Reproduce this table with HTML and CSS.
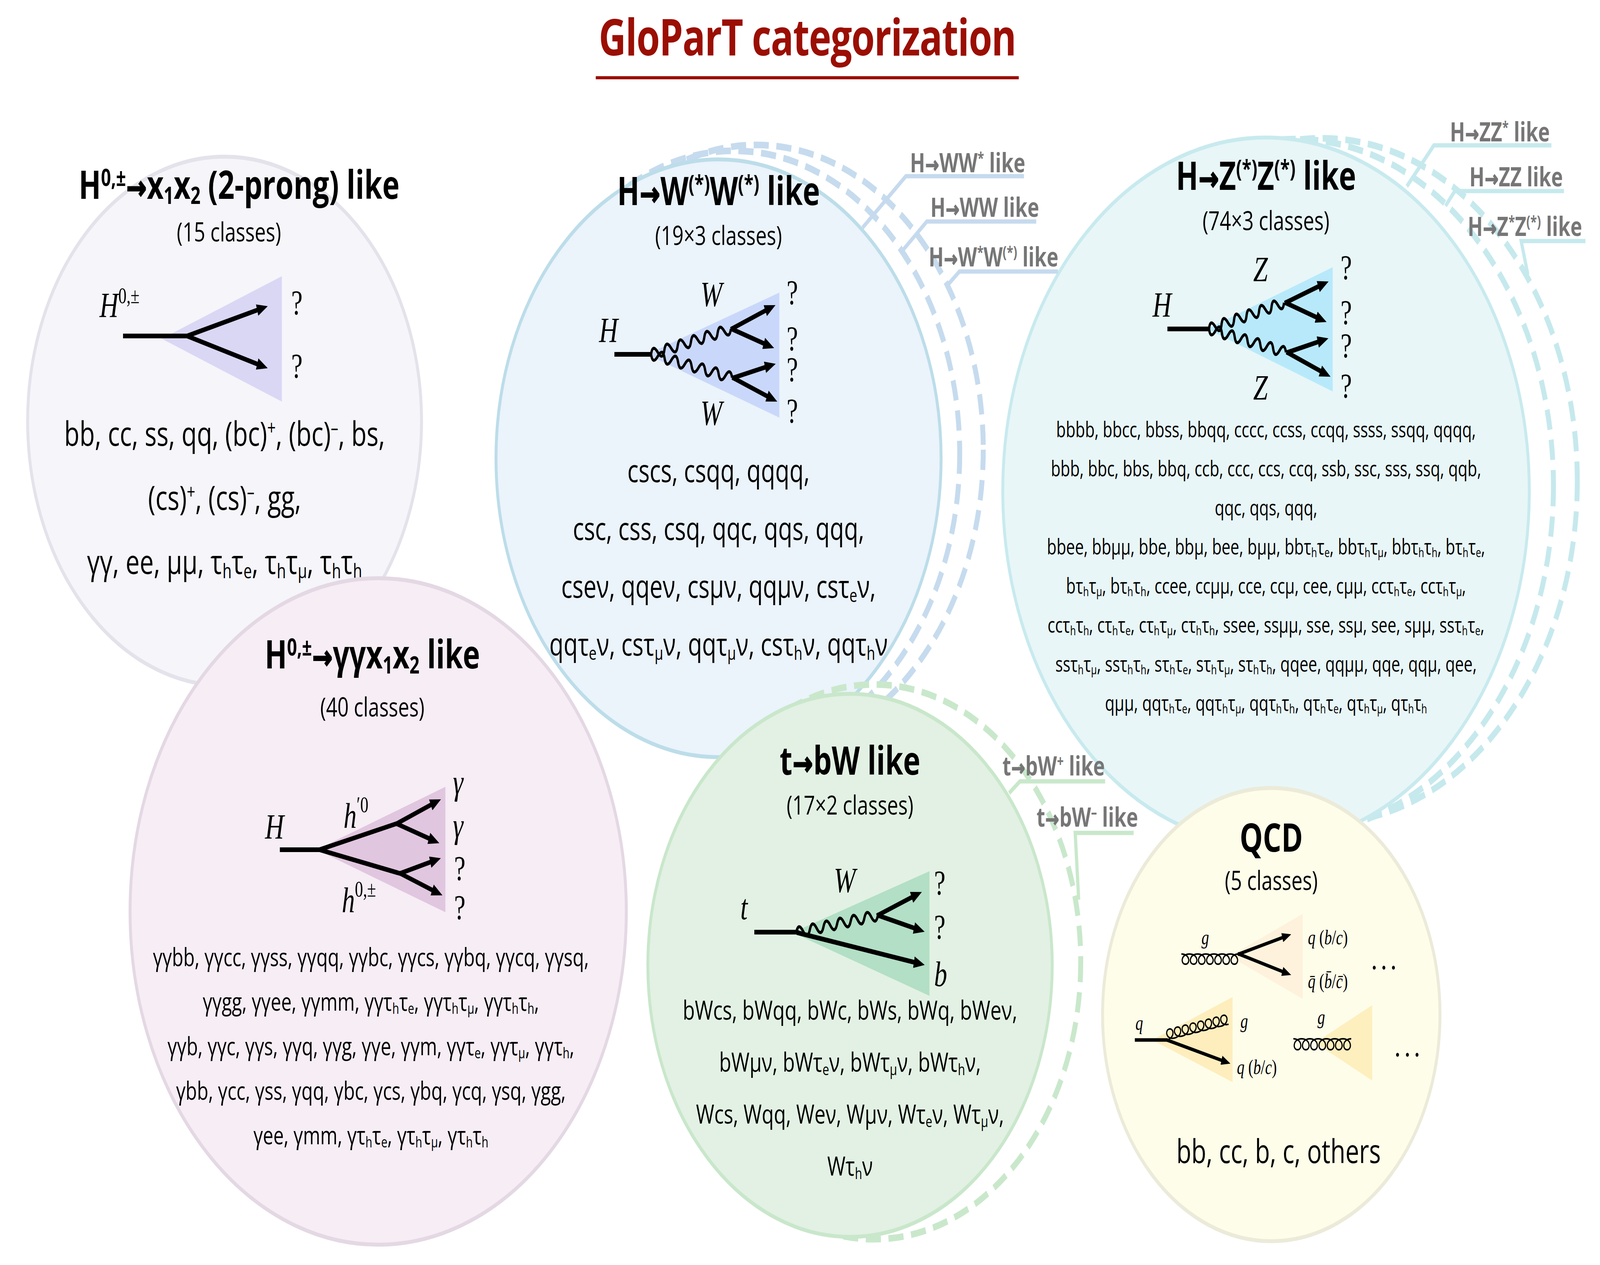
FILE: index.html
```html
<!DOCTYPE html>
<html lang="en">
<head>
<meta charset="utf-8">
<title>GloParT categorization</title>
<link rel="stylesheet" href="styles.css">
</head>
<body>
<div class="frame">
<div class="canvas">
  <svg class="defs" width="0" height="0" aria-hidden="true">
    <defs>
      <marker id="ah" viewBox="0 0 38 30" refX="22" refY="15" markerWidth="38" markerHeight="30" markerUnits="userSpaceOnUse" orient="auto"><path d="M0,0 L38,15 L0,30 z"/></marker>
      <marker id="ah2" viewBox="0 0 32 24" refX="19" refY="12" markerWidth="32" markerHeight="24" markerUnits="userSpaceOnUse" orient="auto"><path d="M0,0 L32,12 L0,24 z"/></marker>
    </defs>
  </svg>

  <header class="header"><h1 class="title">GloParT categorization</h1></header>

  <!-- 2-prong -->
  <section class="circle c1">
    <h2 class="ttl">H<sup>0,±</sup><span class="ar">→</span>x<sub>1</sub>x<sub>2</sub> (2-prong) like</h2>
    <p class="cnt">(15 classes)</p>
    <svg class="dg" width="904" height="344" viewBox="320 686 904 344">
      <polygon fill="#dad7f5" points="556,857 969,697 969,1018"/>
      <line class="ln" x1="423" y1="850" x2="645" y2="850"/>
      <line class="ln arw" x1="643" y1="850" x2="905" y2="778"/>
      <line class="ln arw" x1="643" y1="850" x2="905" y2="928"/>
      <text class="mi" x="342" y="802">H<tspan class="ms" dy="-36">0,±</tspan></text>
      <text class="mr" x="1001" y="794">?</text>
      <text class="mr" x="1001" y="956">?</text>
    </svg>
    <div class="lines">
      <div>bb, cc, ss, qq, (bc)<sup>+</sup>, (bc)<sup>–</sup>, bs,</div>
      <div>(cs)<sup>+</sup>, (cs)<sup>–</sup>, gg,</div>
      <div>γγ, ee, μμ, τ<sub>h</sub>τ<sub>e</sub>, τ<sub>h</sub>τ<sub>μ</sub>, τ<sub>h</sub>τ<sub>h</sub></div>
    </div>
  </section>

  <!-- gamma gamma -->
  <section class="circle c4">
    <h2 class="ttl">H<sup>0,±</sup><span class="ar">→</span>γγx<sub>1</sub>x<sub>2</sub> like</h2>
    <p class="cnt">(40 classes)</p>
    <svg class="dg" width="820" height="375" viewBox="890 1975 820 375">
      <polygon fill="#e1c6df" points="1089,2165 1531,2004 1531,2325"/>
      <line class="ln" x1="962" y1="2165" x2="1102" y2="2165"/>
      <line class="ln" x1="1098" y1="2165" x2="1364" y2="2098"/>
      <line class="ln" x1="1098" y1="2165" x2="1376" y2="2226"/>
      <line class="ln arw" x1="1362" y1="2099" x2="1501" y2="2042"/>
      <line class="ln arw" x1="1362" y1="2098" x2="1495" y2="2143"/>
      <line class="ln arw" x1="1374" y1="2226" x2="1500" y2="2191"/>
      <line class="ln arw" x1="1374" y1="2225" x2="1506" y2="2276"/>
      <text class="mi" x="911" y="2137">H</text>
      <text class="mi" x="1181" y="2109">h<tspan class="ms" dy="-40">′0</tspan></text>
      <text class="mi" x="1175" y="2325">h<tspan class="ms" dy="-40">0,±</tspan></text>
      <text class="mi" x="1557" y="2023">γ</text>
      <text class="mi" x="1557" y="2134">γ</text>
      <text class="mr" x="1561" y="2242">?</text>
      <text class="mr" x="1561" y="2342">?</text>
    </svg>
    <div class="lines">
      <div>γγbb, γγcc, γγss, γγqq, γγbc, γγcs, γγbq, γγcq, γγsq,</div>
      <div>γγgg, γγee, γγmm, γγτ<sub>h</sub>τ<sub>e</sub>, γγτ<sub>h</sub>τ<sub>μ</sub>, γγτ<sub>h</sub>τ<sub>h</sub>,</div>
      <div>γγb, γγc, γγs, γγq, γγg, γγe, γγm, γγτ<sub>e</sub>, γγτ<sub>μ</sub>, γγτ<sub>h</sub>,</div>
      <div>γbb, γcc, γss, γqq, γbc, γcs, γbq, γcq, γsq, γgg,</div>
      <div>γee, γmm, γτ<sub>h</sub>τ<sub>e</sub>, γτ<sub>h</sub>τ<sub>μ</sub>, γτ<sub>h</sub>τ<sub>h</sub></div>
    </div>
  </section>

  <!-- H->WW dashed alternatives -->
  <svg class="layer" width="5500" height="3238" viewBox="0 0 5500 3238" aria-hidden="true">
    <circle class="dash dash-b" cx="2524" cy="1161" r="775"/>
    <circle class="dash dash-b" cx="2600" cy="1151" r="780"/>
  </svg>
  <section class="circle c2">
    <h2 class="ttl">H<span class="ar">→</span>W<sup>(*)</sup>W<sup>(*)</sup> like</h2>
    <p class="cnt">(19×3 classes)</p>
    <svg class="dg" width="860" height="395" viewBox="2040 700 860 395">
      <polygon fill="#c9d8fa" points="2224,897 2679,739 2679,1059"/>
      <line class="ln" x1="2112" y1="897" x2="2242" y2="897"/>
      <path class="wv" transform="translate(2238,897) rotate(-13.3)" d="M0,0q11.75,-26 23.5,0t23.5,0t23.5,0t23.5,0t23.5,0t23.5,0t23.5,0t23.5,0t23.5,0t23.5,0t23.5,0t23.5,0"/>
      <path class="wv" transform="translate(2238,897) rotate(12.1)" d="M0,0q11.9,26 23.75,0t23.75,0t23.75,0t23.75,0t23.75,0t23.75,0t23.75,0t23.75,0t23.75,0t23.75,0t23.75,0t23.75,0"/>
      <line class="ln arw" x1="2512" y1="833" x2="2651" y2="777"/>
      <line class="ln arw" x1="2512" y1="831" x2="2646" y2="876"/>
      <line class="ln arw" x1="2517" y1="958" x2="2651" y2="925"/>
      <line class="ln arw" x1="2517" y1="956" x2="2657" y2="1012"/>
      <text class="mi" x="2059" y="866">H</text>
      <text class="mi" x="2408" y="774">W</text>
      <text class="mi" x="2408" y="1078">W</text>
      <text class="mr" x="2704" y="768">?</text>
      <text class="mr" x="2704" y="886">?</text>
      <text class="mr" x="2704" y="965">?</text>
      <text class="mr" x="2704" y="1071">?</text>
    </svg>
    <div class="lines">
      <div>cscs, csqq, qqqq,</div>
      <div>csc, css, csq, qqc, qqs, qqq,</div>
      <div>cseν, qqeν, csμν, qqμν, csτ<sub>e</sub>ν,</div>
      <div>qqτ<sub>e</sub>ν, csτ<sub>μ</sub>ν, qqτ<sub>μ</sub>ν, csτ<sub>h</sub>ν, qqτ<sub>h</sub>ν</div>
    </div>
  </section>

  <!-- H->ZZ dashed alternatives -->
  <svg class="layer" width="5500" height="3238" viewBox="0 0 5500 3238" aria-hidden="true">
    <circle class="dash dash-c" cx="4452" cy="1244" r="888"/>
    <circle class="dash dash-c" cx="4545" cy="1231" r="877"/>
  </svg>
  <section class="circle c3">
    <h2 class="ttl">H<span class="ar">→</span>Z<sup>(*)</sup>Z<sup>(*)</sup> like</h2>
    <p class="cnt">(74×3 classes)</p>
    <svg class="dg" width="824" height="380" viewBox="3940 640 824 380">
      <polygon fill="#b8e9fb" points="4150,832 4581,674 4581,992"/>
      <line class="ln" x1="4013" y1="832" x2="4160" y2="832"/>
      <path class="wv" transform="translate(4156,832) rotate(-14.6)" d="M0,0q11.1,-26 22.2,0t22.2,0t22.2,0t22.2,0t22.2,0t22.2,0t22.2,0t22.2,0t22.2,0t22.2,0t22.2,0t22.2,0"/>
      <path class="wv" transform="translate(4156,832) rotate(12.8)" d="M0,0q11.3,26 22.6,0t22.6,0t22.6,0t22.6,0t22.6,0t22.6,0t22.6,0t22.6,0t22.6,0t22.6,0t22.6,0t22.6,0"/>
      <line class="ln arw" x1="4416" y1="766" x2="4552" y2="716"/>
      <line class="ln arw" x1="4416" y1="764" x2="4545" y2="809"/>
      <line class="ln arw" x1="4422" y1="893" x2="4551" y2="860"/>
      <line class="ln arw" x1="4422" y1="891" x2="4559" y2="948"/>
      <text class="mi" x="3962" y="801">H</text>
      <text class="mi" x="4308" y="710">Z</text>
      <text class="mi" x="4308" y="1013">Z</text>
      <text class="mr" x="4608" y="704">?</text>
      <text class="mr" x="4608" y="819">?</text>
      <text class="mr" x="4608" y="904">?</text>
      <text class="mr" x="4608" y="1007">?</text>
    </svg>
    <div class="lines">
      <div>bbbb, bbcc, bbss, bbqq, cccc, ccss, ccqq, ssss, ssqq, qqqq,</div>
      <div>bbb, bbc, bbs, bbq, ccb, ccc, ccs, ccq, ssb, ssc, sss, ssq, qqb,</div>
      <div>qqc, qqs, qqq,</div>
      <div>bbee, bbμμ, bbe, bbμ, bee, bμμ, bbτ<sub>h</sub>τ<sub>e</sub>, bbτ<sub>h</sub>τ<sub>μ</sub>, bbτ<sub>h</sub>τ<sub>h</sub>, bτ<sub>h</sub>τ<sub>e</sub>,</div>
      <div>bτ<sub>h</sub>τ<sub>μ</sub>, bτ<sub>h</sub>τ<sub>h</sub>, ccee, ccμμ, cce, ccμ, cee, cμμ, ccτ<sub>h</sub>τ<sub>e</sub>, ccτ<sub>h</sub>τ<sub>μ</sub>,</div>
      <div>ccτ<sub>h</sub>τ<sub>h</sub>, cτ<sub>h</sub>τ<sub>e</sub>, cτ<sub>h</sub>τ<sub>μ</sub>, cτ<sub>h</sub>τ<sub>h</sub>, ssee, ssμμ, sse, ssμ, see, sμμ, ssτ<sub>h</sub>τ<sub>e</sub>,</div>
      <div>ssτ<sub>h</sub>τ<sub>μ</sub>, ssτ<sub>h</sub>τ<sub>h</sub>, sτ<sub>h</sub>τ<sub>e</sub>, sτ<sub>h</sub>τ<sub>μ</sub>, sτ<sub>h</sub>τ<sub>h</sub>, qqee, qqμμ, qqe, qqμ, qee,</div>
      <div>qμμ, qqτ<sub>h</sub>τ<sub>e</sub>, qqτ<sub>h</sub>τ<sub>μ</sub>, qqτ<sub>h</sub>τ<sub>h</sub>, qτ<sub>h</sub>τ<sub>e</sub>, qτ<sub>h</sub>τ<sub>μ</sub>, qτ<sub>h</sub>τ<sub>h</sub></div>
    </div>
  </section>

  <!-- t->bW dashed alternative -->
  <svg class="layer" width="5500" height="3238" viewBox="0 0 5500 3238" aria-hidden="true">
    <circle class="dash dash-g" cx="3005" cy="2462" r="710"/>
  </svg>
  <section class="circle c5">
    <h2 class="ttl">t<span class="ar">→</span>bW like</h2>
    <p class="cnt">(17×2 classes)</p>
    <svg class="dg" width="784" height="321" viewBox="2530 2200 784 321">
      <polygon fill="#b2dfc5" points="2725,2377 3195,2220 3195,2539"/>
      <line class="ln" x1="2593" y1="2376" x2="2745" y2="2376"/>
      <path class="wv" transform="translate(2737,2377) rotate(-8.9)" d="M0,0q11.85,-26 23.7,0t23.7,0t23.7,0t23.7,0t23.7,0t23.7,0t23.7,0t23.7,0t23.7,0t23.7,0t23.7,0t23.7,0"/>
      <line class="ln arw" x1="3014" y1="2334" x2="3154" y2="2279"/>
      <line class="ln arw" x1="3014" y1="2332" x2="3163" y2="2371"/>
      <line class="ln arw" x1="2739" y1="2377" x2="3163" y2="2457"/>
      <text class="mi" x="2545" y="2343">t</text>
      <text class="mi" x="2866" y="2274">W</text>
      <text class="mr" x="3211" y="2279">?</text>
      <text class="mr" x="3211" y="2392">?</text>
      <text class="mi" x="3211" y="2514">b</text>
    </svg>
    <div class="lines">
      <div>bWcs, bWqq, bWc, bWs, bWq, bWeν,</div>
      <div>bWμν, bWτ<sub>e</sub>ν, bWτ<sub>μ</sub>ν, bWτ<sub>h</sub>ν,</div>
      <div>Wcs, Wqq, Weν, Wμν, Wτ<sub>e</sub>ν, Wτ<sub>μ</sub>ν,</div>
      <div>Wτ<sub>h</sub>ν</div>
    </div>
  </section>

  <!-- QCD -->
  <section class="circle c6">
    <h2 class="ttl">QCD</h2>
    <p class="cnt">(5 classes)</p>
    <svg class="dg" width="1020" height="460" viewBox="3860 2330 1020 460">
      <polygon fill="#fef2dd" points="4227,2449 4478,2340 4478,2558"/>
      <path class="gl" transform="translate(4061,2443)" d="M0,0c30.8,0 30.8,26 14,26c-16.8,0 -16.8,-26 14,-26c30.8,0 30.8,26 14,26c-16.8,0 -16.8,-26 14,-26c30.8,0 30.8,26 14,26c-16.8,0 -16.8,-26 14,-26c30.8,0 30.8,26 14,26c-16.8,0 -16.8,-26 14,-26c30.8,0 30.8,26 14,26c-16.8,0 -16.8,-26 14,-26c30.8,0 30.8,26 14,26c-16.8,0 -16.8,-26 14,-26c30.8,0 30.8,26 14,26c-16.8,0 -16.8,-26 14,-26"/>
      <line class="ln2 arw2" x1="4255" y1="2444" x2="4426" y2="2396"/>
      <line class="ln2 arw2" x1="4255" y1="2442" x2="4426" y2="2493"/>
      <text class="mi sm" x="4130" y="2418">g</text>
      <text class="mr sm" x="4496" y="2418"><tspan class="it">q</tspan> (<tspan class="it">b</tspan>/<tspan class="it">c</tspan>)</text>
      <text class="mr sm" x="4496" y="2530"><tspan class="it">q̄</tspan> (<tspan class="it">b̄</tspan>/<tspan class="it">c̄</tspan>)</text>
      <circle cx="4724" cy="2478" r="5"/><circle cx="4757" cy="2478" r="5"/><circle cx="4790" cy="2478" r="5"/>

      <polygon fill="#feeebd" points="3961,2663 4237,2553 4237,2771"/>
      <line class="ln2" x1="3901" y1="2663" x2="4013" y2="2663"/>
      <path class="gl" transform="translate(4011,2663) rotate(-10.7)" d="M0,0c29.7,0 29.7,-26 13.5,-26c-16.2,0 -16.2,26 13.5,26c29.7,0 29.7,-26 13.5,-26c-16.2,0 -16.2,26 13.5,26c29.7,0 29.7,-26 13.5,-26c-16.2,0 -16.2,26 13.5,26c29.7,0 29.7,-26 13.5,-26c-16.2,0 -16.2,26 13.5,26c29.7,0 29.7,-26 13.5,-26c-16.2,0 -16.2,26 13.5,26c29.7,0 29.7,-26 13.5,-26c-16.2,0 -16.2,26 13.5,26c29.7,0 29.7,-26 13.5,-26c-16.2,0 -16.2,26 13.5,26c29.7,0 29.7,-26 13.5,-26c-16.2,0 -16.2,26 13.5,26"/>
      <line class="ln2 arw2" x1="4011" y1="2663" x2="4217" y2="2720"/>
      <text class="mi sm" x="3903" y="2637">q</text>
      <text class="mi sm" x="4264" y="2632">g</text>
      <text class="mr sm" x="4252" y="2750"><tspan class="it">q</tspan> (<tspan class="it">b</tspan>/<tspan class="it">c</tspan>)</text>

      <polygon fill="#feefbf" points="4521,2670 4717,2574 4717,2767"/>
      <path class="gl" transform="translate(4446,2660)" d="M0,0c31.2,0 31.2,28 14.2,28c-17,0 -17,-28 14.2,-28c31.2,0 31.2,28 14.2,28c-17,0 -17,-28 14.2,-28c31.2,0 31.2,28 14.2,28c-17,0 -17,-28 14.2,-28c31.2,0 31.2,28 14.2,28c-17,0 -17,-28 14.2,-28c31.2,0 31.2,28 14.2,28c-17,0 -17,-28 14.2,-28c31.2,0 31.2,28 14.2,28c-17,0 -17,-28 14.2,-28c31.2,0 31.2,28 14.2,28c-17,0 -17,-28 14.2,-28"/>
      <text class="mi sm" x="4529" y="2622">g</text>
      <circle cx="4804" cy="2701" r="5"/><circle cx="4838" cy="2701" r="5"/><circle cx="4871" cy="2701" r="5"/>
    </svg>
    <div class="lines">
      <div>bb, cc, b, c, others</div>
    </div>
  </section>

  <!-- leader lines -->
  <svg class="layer" width="5500" height="3238" viewBox="0 0 5500 3238" aria-hidden="true">
    <g class="ld ld-b">
      <polyline points="3520,451 3114,451 2965,583"/>
      <polyline points="3562,567 3186,567 3104,640"/>
      <polyline points="3637,695 3298,695 3257,730"/>
    </g>
    <g class="ld ld-c">
      <polyline points="5333,372 4929,372 4836,477"/>
      <polyline points="5376,489 5001,489 4969,527"/>
      <polyline points="5450,617 5229,617 5252,703"/>
    </g>
    <g class="ld ld-g">
      <polyline points="3799,2000 3506,2000 3469,2030"/>
      <polyline points="3897,2132 3696,2132 3708,2303"/>
    </g>
  </svg>

  <div class="lbl lb-ww1">H<span class="ar">→</span>WW<sup>*</sup> like</div>
  <div class="lbl lb-ww2">H<span class="ar">→</span>WW like</div>
  <div class="lbl lb-ww3">H<span class="ar">→</span>W<sup>*</sup>W<sup>(*)</sup> like</div>
  <div class="lbl lb-zz1">H<span class="ar">→</span>ZZ<sup>*</sup> like</div>
  <div class="lbl lb-zz2">H<span class="ar">→</span>ZZ like</div>
  <div class="lbl lb-zz3">H<span class="ar">→</span>Z<sup>*</sup>Z<sup>(*)</sup> like</div>
  <div class="lbl lb-tb1">t<span class="ar">→</span>bW<sup>+</sup> like</div>
  <div class="lbl lb-tb2">t<span class="ar">→</span>bW<sup>–</sup> like</div>
</div>
</div>
<script src="script.js"></script>
</body>
</html>
```

FILE: styles.css
```css
html, body {
  margin: 0;
  padding: 0;
  background: #ffffff;
  overflow: hidden;
}
body {
  font-family: "Open Sans", "Noto Sans", "DejaVu Sans", sans-serif;
  color: #000;
}
/* The window frame; the drawing inside is laid out in 5500 x 3238 units
   and fitted to the real window (script.js sets --sx / --sy). */
.frame {
  position: relative;
  width: 100vw;
  height: 100vh;
  overflow: hidden;
}
.canvas {
  position: absolute;
  left: 0;
  top: 0;
  width: 5500px;
  height: 3238px;
  transform-origin: 0 0;
  transform: scale(var(--sx, 0.744727), var(--sy, 1));
}
.defs { position: absolute; width: 0; height: 0; }

/* ---------- title ---------- */
.header {
  display: flex;
  justify-content: center;
  padding-top: 32px;
  padding-left: 50px;
}
.title {
  margin: 0;
  padding: 0 10px 43px;
  font-size: 130px;
  line-height: 120px;
  font-weight: 700;
  letter-spacing: -2px;
  color: #9b0e03;
  border-bottom: 8px solid #9b0e03;
  white-space: nowrap;
}

/* ---------- circles ---------- */
.circle {
  position: absolute;
  box-sizing: border-box;
  border: 10px solid;
  border-radius: 50%;
  display: flex;
  flex-direction: column;
  align-items: center;
}
.circle > * { flex: none; }
.ttl {
  margin: 0;
  font-size: 100px;
  line-height: 120px;
  font-weight: 700;
  white-space: nowrap;
}
.cnt {
  margin: 0;
  font-size: 68px;
  line-height: 80px;
  white-space: nowrap;
}
.dg { display: block; overflow: visible; }
.lines { text-align: center; white-space: nowrap; }

sup { font-size: .6em; line-height: 0; vertical-align: .55em; }
sub { font-size: .6em; line-height: 0; vertical-align: -.22em; }
.ar {
  font-family: "DejaVu Sans", sans-serif;
  font-size: .82em;
  -webkit-text-stroke: .045em currentColor;
  margin: 0 .02em;
}

.c1 { left: 90px;   top: 396px;  width: 1364px; height: 1364px; padding-top: 4px;   background: #f5f5fa; border-color: #e4e2ea; }
.c4 { left: 442px;  top: 1475px; width: 1716px; height: 1716px; padding-top: 127px; background: #f6edf5; border-color: #e3d8e3; }
.c2 { left: 1700px; top: 403px;  width: 1540px; height: 1540px; padding-top: 13px;  background: #ebf3fb; border-color: #bcdde9; }
.c3 { left: 3442px; top: 347px;  width: 1820px; height: 1820px; padding-top: 30px;  background: #e8f6f7; border-color: #c8eaee; }
.c5 { left: 2222px; top: 1771px; width: 1400px; height: 1400px; padding-top: 103px; background: #e2f1e3; border-color: #c9e7cb; }
.c6 { left: 3785px; top: 2012px; width: 1170px; height: 1170px; padding-top: 59px;  background: #fefde9; border-color: #ecead9; }

.c1 .ttl { margin-left: 100px; }
.c1 .cnt { margin-top: 11px; margin-left: 30px; }
.c1 .dg { margin-top: 64px; }
.c1 .lines { margin-top: -14px; font-size: 86px; line-height: 164px; }

.c2 .cnt { margin-top: 4px; }
.c2 .dg { margin-top: 69px; }
.c2 .lines { margin-top: 24px; font-size: 80px; line-height: 148px; }

.c3 .cnt { margin-top: 5px; }
.c3 .dg { margin-top: 47px; }
.c3 .lines { margin-top: 18px; font-size: 54px; line-height: 100px; }

.c4 .ttl { margin-right: 40px; }
.c4 .cnt { margin-top: 25px; margin-right: 40px; }
.c4 .dg { margin-top: 137px; }
.c4 .lines { margin-top: 32px; margin-right: 50px; font-size: 64px; line-height: 114px; }

.c5 .cnt { margin-top: 4px; }
.c5 .dg { margin-top: 111px; }
.c5 .lines { margin-top: -14px; font-size: 68px; line-height: 133px; }

.c6 .cnt { margin-top: 11px; }
.c6 .dg { margin-top: 37px; }
.c6 .lines { margin-top: 96px; margin-left: 50px; font-size: 84px; line-height: 120px; }

/* ---------- diagram strokes & math labels ---------- */
.ln { stroke: #000; stroke-width: 12; fill: none; }
.ln2 { stroke: #000; stroke-width: 9; fill: none; }
.arw { marker-end: url(#ah); }
.arw2 { marker-end: url(#ah2); }
.wv { stroke: #000; stroke-width: 8; fill: none; stroke-linejoin: round; }
.gl { stroke: #000; stroke-width: 4; fill: none; }
.mi { font-family: "Liberation Serif", "Times New Roman", serif; font-style: italic; font-size: 90px; fill: #000; }
.mr { font-family: "Liberation Serif", "Times New Roman", serif; font-style: normal; font-size: 88px; fill: #000; }
.ms { font-style: normal; font-size: 56px; }
.sm { font-size: 52px; }
.it { font-style: italic; }

/* ---------- overlays ---------- */
.layer { position: absolute; left: 0; top: 0; pointer-events: none; }
.dash { fill: none; stroke-width: 17; stroke-dasharray: 52 26; }
.dash-b { stroke: #c6dbee; }
.dash-c { stroke: #c6e9ed; }
.dash-g { stroke: #c9e8cb; }
.ld polyline { fill: none; stroke-width: 11; stroke-linejoin: miter; }
.ld-b polyline { stroke: #c6daee; }
.ld-c polyline { stroke: #c6e9ed; }
.ld-g polyline { stroke: #c9e8cb; }

.lbl {
  position: absolute;
  font-size: 68px;
  line-height: 68px;
  font-weight: 700;
  color: #767676;
  white-space: nowrap;
}
.lb-ww1 { left: 3128px; top: 381px; }
.lb-ww2 { left: 3198px; top: 495px; }
.lb-ww3 { left: 3192px; top: 622px; }
.lb-zz1 { left: 4984px; top: 302px; }
.lb-zz2 { left: 5051px; top: 417px; }
.lb-zz3 { left: 5045px; top: 544px; }
.lb-tb1 { left: 3446px; top: 1925px; }
.lb-tb2 { left: 3563px; top: 2056px; }
```

FILE: script.js
```js
// Fit the 5500 x 3238 drawing to the real window size.
(function () {
  var root = document.documentElement;
  function fit() {
    root.style.setProperty('--sx', (window.innerWidth / 5500).toFixed(6));
    root.style.setProperty('--sy', (window.innerHeight / 3238).toFixed(6));
  }
  fit();
  window.addEventListener('resize', fit);
})();
```
